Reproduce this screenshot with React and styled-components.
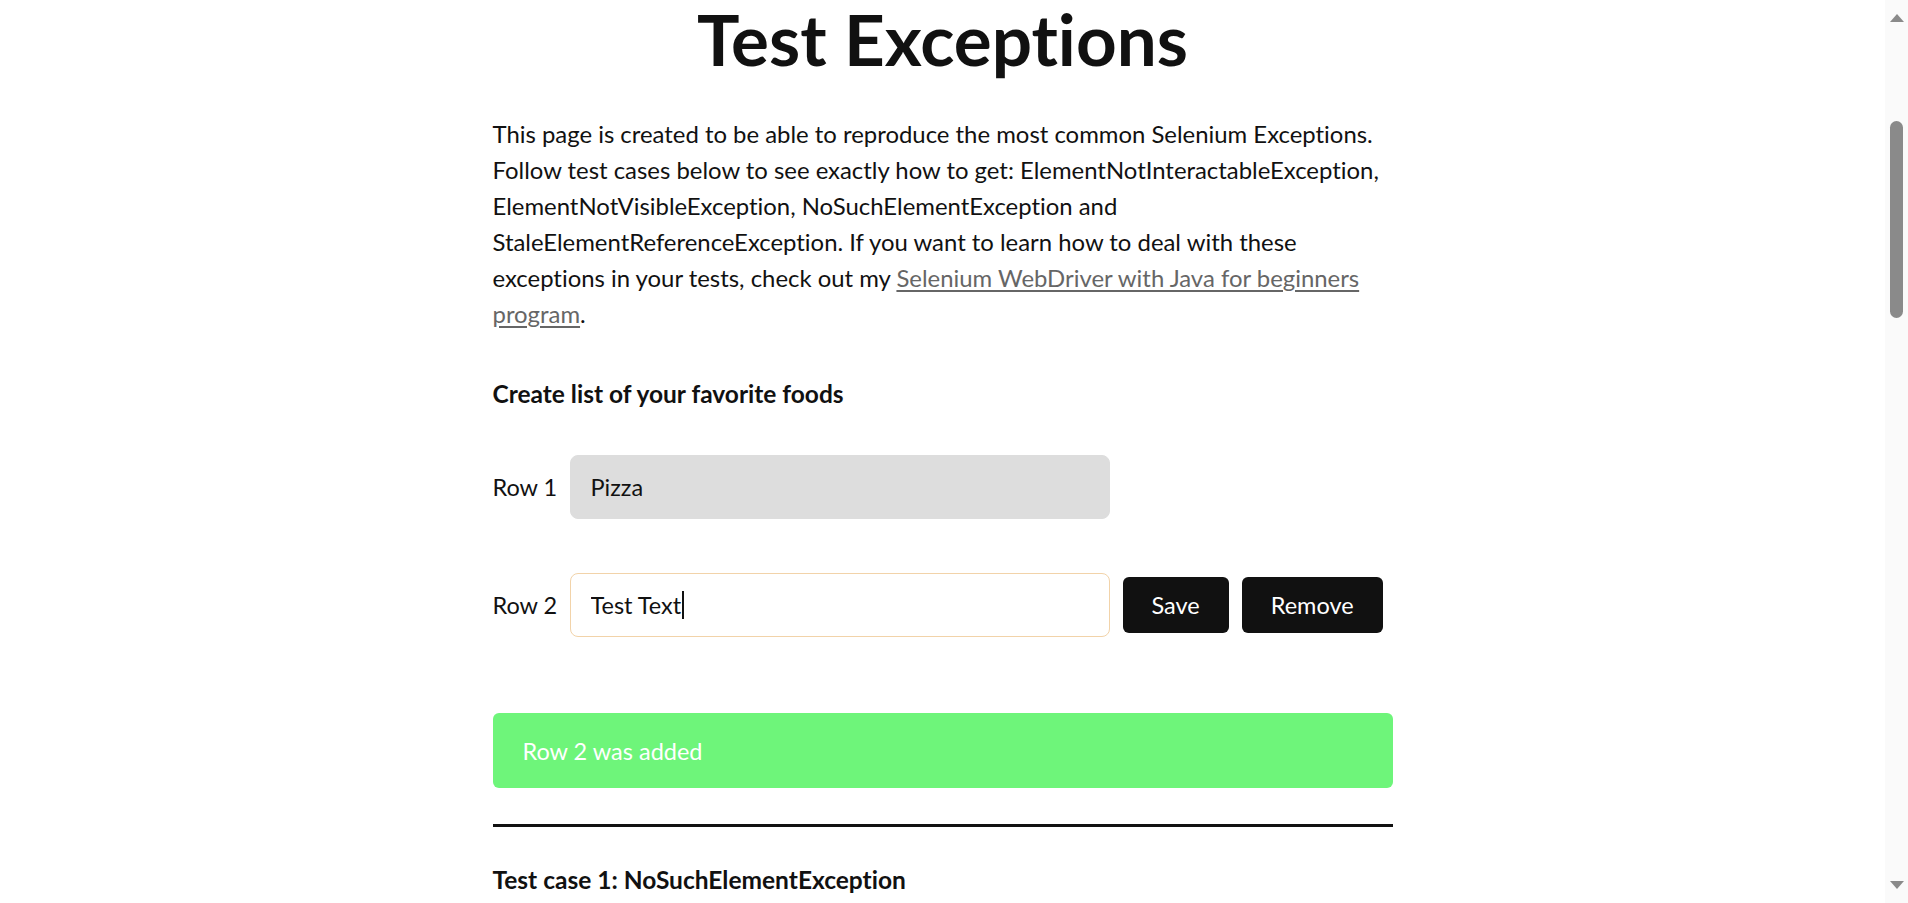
import React, { useLayoutEffect, useRef } from "react";
import styled, { createGlobalStyle } from "styled-components";

const steps = [
  {
    title: "Test case 1: NoSuchElementException",
    items: [
      "Open page",
      "Click Add button",
      "Verify Row 2 input field is displayed",
    ],
    note: "Row 2 doesn’t appear immediately. This test will fail with org.openqa.selenium.NoSuchElementException without proper wait.",
  },
  {
    title: "Test case 2: ElementNotInteractableException",
    items: [
      "Open page",
      "Click Add button",
      "Wait for the second row to load",
      "Type text into the second input field",
      "Push Save button using locator By.name(“Save”)",
      "Verify text saved",
    ],
    note: "There are two Save buttons on the page with the same name. Selenium will try to click the first one, which is hidden.",
  },
  {
    title: "Test case 3: InvalidElementStateException",
    items: [
      "Open page",
      "Clear input field",
      "Type text into the input field",
      "Verify text changed",
    ],
    note: "Input field is disabled. It has to be enabled by clicking Edit button before clearing it.",
  },
  {
    title: "Test case 4: StaleElementReferenceException",
    items: [
      "Open page",
      "Find the instructions text element",
      "Push add button",
      "Verify instruction text element is no longer displayed",
    ],
    note: "Instructions text element is removed from the page when the second row is added.",
  },
  {
    title: "Test case 5: TimeoutException",
    items: [
      "Open page",
      "Click Add button",
      "Wait for 3 seconds for the second input field to be displayed",
      "Verify second input field is displayed",
    ],
    note: "Row 2 is loaded after about 5 seconds, so the test fails with a 3 second wait.",
  },
];

const App = () => {
  const titleRef = useRef(null);

  useLayoutEffect(() => {
    if (titleRef.current) {
      window.scrollTo(0, titleRef.current.offsetTop + 4);
    }
  }, []);

  return (
    <Page>
      <GlobalStyle />
      <SiteHeader>
        <Logo>Practice Test Automation</Logo>
        <Nav>
          <NavLink>Home</NavLink>
          <NavLink>Practice</NavLink>
          <NavLink>Courses</NavLink>
          <NavLink>Blog</NavLink>
          <NavLink>Contact</NavLink>
        </Nav>
      </SiteHeader>
      <Wrapper>
        <Main>
          <Title ref={titleRef}>Test Exceptions</Title>
          <Intro>
            This page is created to be able to reproduce the most common
            Selenium Exceptions. Follow test cases below to see exactly how to
            get: ElementNotInteractableException, ElementNotVisibleException,
            NoSuchElementException and StaleElementReferenceException. If you
            want to learn how to deal with these exceptions in your tests,
            check out my{" "}
            <Link href="#">
              Selenium WebDriver with Java for beginners program
            </Link>
            .
          </Intro>
          <SectionTitle $top={44}>Create list of your favorite foods</SectionTitle>
          <Row $top={43}>
            <RowLabel>Row 1</RowLabel>
            <FieldBox>
              <FoodInput value="Pizza" disabled readOnly $disabled />
            </FieldBox>
          </Row>
          <Row $top={54}>
            <RowLabel>Row 2</RowLabel>
            <FieldBox>
              <FoodInput defaultValue="Test Text" $focused />
              <Caret />
            </FieldBox>
            <ActionButton>Save</ActionButton>
            <ActionButton>Remove</ActionButton>
          </Row>
          <Confirmation>Row 2 was added</Confirmation>
          <Divider />
          {steps.map((step) => (
            <TestCase key={step.title}>
              <SectionTitle $top={0}>{step.title}</SectionTitle>
              <Steps>
                {step.items.map((item) => (
                  <li key={item}>{item}</li>
                ))}
              </Steps>
              <Note>{step.note}</Note>
            </TestCase>
          ))}
        </Main>
      </Wrapper>
      <Footer>
        <FooterText>© 2020 – 2025 Practice Test Automation</FooterText>
      </Footer>
      <ScrollTrack>
        <ScrollArrow />
        <ScrollThumb />
        <ScrollArrow $down />
      </ScrollTrack>
    </Page>
  );
};

export default App;

const GlobalStyle = createGlobalStyle`
  html, body {
    margin: 0;
    padding: 0;
    background: #ffffff;
  }

  body {
    font-family: Lato, "Open Sans", sans-serif;
    font-variant-ligatures: no-common-ligatures;
    color: #111111;
  }
`;

const Page = styled.div`
  display: flex;
  flex-direction: column;
  min-height: 4001px;
`;

const SiteHeader = styled.header`
  display: flex;
  align-items: center;
  justify-content: space-between;
  height: 120px;
  padding: 0 60px;
`;

const Logo = styled.div`
  font-size: 26px;
  font-weight: 700;
`;

const Nav = styled.nav`
  display: flex;
  gap: 36px;
`;

const NavLink = styled.span`
  font-size: 18px;
  font-weight: 700;
`;

const Wrapper = styled.div`
  padding-right: 23px;
  padding-top: 366px;
`;

const Main = styled.main`
  width: 900px;
  margin: 0 auto;
`;

const Title = styled.h1`
  margin: 0;
  font-size: 71px;
  line-height: 86px;
  font-weight: 700;
  text-align: center;
  color: #111111;
`;

const Intro = styled.p`
  margin: 34px 0 0;
  font-size: 23.9px;
  line-height: 36px;
`;

const Link = styled.a`
  color: #666666;
  text-decoration: underline;
  text-underline-offset: 3px;
`;

const SectionTitle = styled.h2`
  margin: ${(p) => p.$top}px 0 0;
  font-size: 24.5px;
  line-height: 36px;
  font-weight: 700;
`;

const Row = styled.div`
  display: flex;
  align-items: center;
  gap: 13px;
  margin-top: ${(p) => p.$top}px;
`;

const RowLabel = styled.label`
  flex-shrink: 0;
  width: 64px;
  font-size: 23.5px;
  white-space: nowrap;
`;

const FieldBox = styled.div`
  position: relative;
  display: flex;
  flex-shrink: 0;
`;

const FoodInput = styled.input`
  box-sizing: border-box;
  width: 540px;
  height: 64px;
  padding: 0 20px;
  border: 1px solid ${(p) => (p.$focused ? "#f2d3a9" : "#dddddd")};
  border-radius: 8px;
  background: ${(p) => (p.$disabled ? "#dddddd" : "#ffffff")};
  font-family: Lato, sans-serif;
  font-variant-ligatures: no-common-ligatures;
  font-size: 23.5px;
  color: #111111;
  outline: none;

  &:disabled {
    color: #111111;
    -webkit-text-fill-color: #111111;
  }
`;

const Caret = styled.span`
  position: absolute;
  left: 112px;
  top: 18px;
  width: 2px;
  height: 28px;
  background: #111111;
`;

const ActionButton = styled.button`
  flex-shrink: 0;
  height: 56px;
  padding: 0 29px;
  border: none;
  border-radius: 6px;
  background: #111111;
  color: #ffffff;
  font-family: Lato, sans-serif;
  font-size: 23.5px;
  cursor: pointer;
`;

const Confirmation = styled.div`
  box-sizing: border-box;
  height: 75px;
  margin-top: 76px;
  padding: 19.5px 30px;
  border-radius: 6px;
  background: #6ef57a;
  color: #ffffff;
  font-size: 23.5px;
  line-height: 36px;
`;

const Divider = styled.hr`
  margin: 36px 0 0;
  height: 3px;
  border: none;
  background: #111111;
`;

const TestCase = styled.section`
  margin-top: 35px;
  padding-bottom: 60px;
`;

const Steps = styled.ol`
  margin: 24px 0 0;
  padding-left: 28px;
  font-size: 23.5px;
  line-height: 36px;
`;

const Note = styled.p`
  margin: 20px 0 0;
  font-size: 23.5px;
  line-height: 36px;
`;

const Footer = styled.footer`
  margin-top: auto;
  display: flex;
  align-items: center;
  justify-content: center;
  height: 200px;
  background: #f4f4f4;
`;

const FooterText = styled.div`
  font-size: 16px;
  color: #555555;
`;

/* window scrollbar, drawn since the headless page hides the real one */
const ScrollTrack = styled.div`
  position: fixed;
  top: 0;
  right: 0;
  bottom: 0;
  width: 23px;
  display: flex;
  flex-direction: column;
  align-items: center;
  background: #fafafa;
`;

const ScrollArrow = styled.div`
  width: 0;
  height: 0;
  margin: ${(p) => (p.$down ? "auto 0 14px" : "14px 0 0")};
  border-left: 7px solid transparent;
  border-right: 7px solid transparent;
  ${(p) =>
    p.$down ? "border-top: 8px solid #8a8a8a;" : "border-bottom: 8px solid #8a8a8a;"}
`;

const ScrollThumb = styled.div`
  width: 13px;
  height: 197px;
  margin-top: 99px;
  border-radius: 7px;
  background: #8a8a8a;
`;
